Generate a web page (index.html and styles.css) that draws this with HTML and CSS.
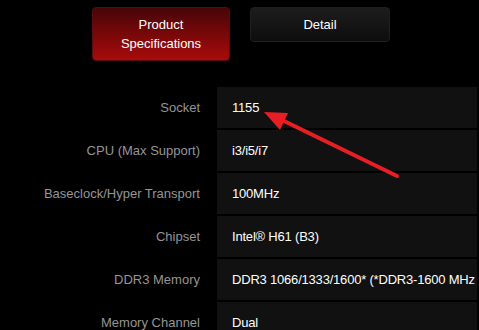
FILE: index.html
```html
<html>
	<head>
		<title>Product Specifications</title>
		<meta name="viewport" content="width=device-width, initial-scale=1">
		<link rel="stylesheet" href="styles.css">
	</head>
	<body>
		<div class="tabs">
			<button class="tab tabActive">Product<br>Specifications</button>
			<button class="tab">Detail</button>
		</div>
		<div class="specs">
			<div class="label">Socket</div>
			<div class="value">1155</div>
			<div class="label">CPU (Max Support)</div>
			<div class="value">i3/i5/i7</div>
			<div class="label">Baseclock/Hyper Transport</div>
			<div class="value">100MHz</div>
			<div class="label">Chipset</div>
			<div class="value">Intel&reg; H61 (B3)</div>
			<div class="label">DDR3 Memory</div>
			<div class="value">DDR3 1066/1333/1600* (*DDR3-1600 MHz can only be supported by 3rd Generation processors)</div>
			<div class="label">Memory Channel</div>
			<div class="value">Dual</div>
		</div>
		<svg class="arrow" width="479" height="330" viewBox="0 0 479 330">
			<line x1="397" y1="176" x2="282" y2="120" stroke="#e81e25" stroke-width="4" stroke-linecap="round"/>
			<polygon points="264,112 288,113 280,130" fill="#e81e25"/>
		</svg>
	</body>
</html>
```

FILE: styles.css
```css
html{background: #000;}
body{margin: 0; background: #000; font-family: "Liberation Sans", Arial, sans-serif; font-size: 13px; position: relative; height: 330px; overflow: hidden;}
.tabs{display: flex; align-items: flex-start; gap: 20px; padding: 7px 0 0 92px;}
.tab{font-family: "Liberation Sans", Arial, sans-serif; font-size: 13px; line-height: 19px; color: #fff;
	padding: 7px 0; border-radius: 4px; cursor: pointer; text-align: center;
	background: linear-gradient(#1d1d1d, #0d0d0d); border: 1px solid #1f1f1f; width: 140px;}
.tabActive{background: linear-gradient(#480508, #a80b0b); border-color: #5a0a0c; width: 138px;}
.specs{display: grid; grid-template-columns: 217px 1fr; grid-auto-rows: 41px; row-gap: 2px; margin: 26px 2px 0 0;}
.label{display: flex; align-items: center; justify-content: flex-end; padding-right: 17px; color: #959595;}
.value{display: flex; align-items: center; padding-left: 15px; background: #111; color: #fff; white-space: nowrap; overflow: hidden; letter-spacing: -0.2px;}
.arrow{position: absolute; left: 0; top: 0; pointer-events: none;}
```
